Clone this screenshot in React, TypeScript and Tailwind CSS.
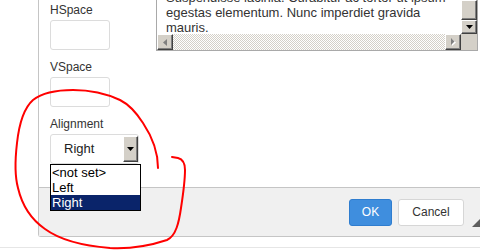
import React from "react";

const bevel =
  "bg-[#d4d0c8] border border-t-white border-l-white border-r-[#404040] border-b-[#404040] shadow-[inset_-1px_-1px_#808080]";

function Field({ label }: { label: string }) {
  return (
    <>
      <div className="h-[14px] leading-[14px] text-[12px]">{label}</div>
      <div className="mt-[3px] mb-[10px] w-[60px] h-[30px] border border-[#dcdcdc] rounded-[3px] bg-white" />
    </>
  );
}

export default function App() {
  return (
    <div className="relative w-[480px] h-[252px] overflow-hidden bg-white font-['Liberation_Sans',Arial,sans-serif] text-[#333]">
      <div className="ml-[38px] h-[237px] flex flex-col border-l border-b border-[#c5c5c5] rounded-bl-[3px] bg-white">
        <div className="relative z-10 flex h-[187px]">
          {/* left column */}
          <div className="w-[117px] pl-[11px] pt-[3px] flex flex-col">
            <Field label="HSpace" />
            <Field label="VSpace" />
            <div className="h-[14px] leading-[14px] text-[12px]">Alignment</div>
            <div className="relative mt-[3px] w-[89px] h-[30px] flex border border-[#dcdcdc] rounded-[3px] bg-white">
              <div className="flex-1 pl-[13px] text-[13px] leading-[28px] text-[#222]">Right</div>
              <div className={`w-[15px] my-px ${bevel} flex items-center justify-center`}>
                <svg width="7" height="4" viewBox="0 0 7 4">
                  <polygon points="0,0 7,0 3.5,4" fill="#000" />
                </svg>
              </div>
              {/* open list */}
              <div className="absolute z-20 left-[-1px] top-[29px] w-[91px] border border-black bg-white text-[13px] leading-[15px] text-black">
                <div className="pl-px">&lt;not set&gt;</div>
                <div className="pl-px">Left</div>
                <div className="pl-px bg-[#0a246a] text-white">Right</div>
              </div>
            </div>
          </div>

          {/* textarea */}
          <div className="w-[322px] h-[51px] flex flex-col border-l border-r border-b border-[#a9a9a9] bg-white">
            <div className="flex h-[34px]">
              <div className="flex-1 overflow-hidden pl-[9px] text-[13px] leading-[15px] text-[#333]">
                <div className="mt-[-10px]">
                  <div>Suspendisse lacinia. Curabitur ac tortor ut ipsum</div>
                  <div>egestas elementum. Nunc imperdiet gravida</div>
                  <div>mauris.</div>
                </div>
              </div>
              <div className="w-[16px] flex flex-col">
                <div className={`flex-1 ${bevel}`} />
                <div className={`h-[14px] ${bevel} flex items-center justify-center`}>
                  <svg width="7" height="4" viewBox="0 0 7 4">
                    <polygon points="0,0 7,0 3.5,4" fill="#000" />
                  </svg>
                </div>
              </div>
            </div>
            <div className="flex h-[16px]">
              <div className={`w-[16px] ${bevel} flex items-center justify-center`}>
                <svg width="4" height="7" viewBox="0 0 4 7">
                  <polygon points="4,0 4,7 0,3.5" fill="#808080" />
                </svg>
              </div>
              <div className="flex-1 bg-[image:repeating-conic-gradient(#d4d0c8_0_25%,#ffffff_0_50%)] bg-[length:2px_2px]" />
              <div className={`w-[16px] ${bevel} flex items-center justify-center`}>
                <svg width="5" height="8" viewBox="0 0 5 8">
                  <polygon points="1,1 1,8 5,4.5" fill="#ffffff" />
                  <polygon points="0,0 0,7 3.5,3.5" fill="#808080" />
                </svg>
              </div>
              <div className="w-[16px] bg-[#d4d0c8]" />
            </div>
          </div>
        </div>

        {/* footer */}
        <div className="relative flex-1 border-t border-[#c5c5c5] bg-[#f0f0f0] flex items-center justify-end gap-[6px] pr-[16px]">
          <button className="w-[43px] h-[27px] rounded-[3px] border border-[#2f7dcf] bg-[#3f8ede] text-white text-[12px]">
            OK
          </button>
          <button className="w-[66px] h-[27px] rounded-[3px] border border-[#d6d6d6] bg-white text-[#333] text-[12px]">
            Cancel
          </button>
          <svg className="absolute right-0 bottom-[9px]" width="8" height="8" viewBox="0 0 8 8">
            <polygon points="8,0 8,8 0,8" fill="#5e5e5e" />
          </svg>
        </div>
      </div>
      <div className="mt-[10px] h-px bg-[#e6e6e6]" />

      {/* red annotation */}
      <svg className="absolute inset-0 z-30 pointer-events-none" width="480" height="252" viewBox="0 0 480 252">
        <path
          d="M158,168 C158,155 153,138 143,123 C136,112 128,104 120,100 C105,93 88,90 73,90 C58,90 42,93 33,100 C24,108 19,125 17,143 C15,160 15,177 18,188 C22,205 32,220 45,229 C60,240 85,246 110,248 C130,249 152,245 167,240 C176,236 179,222 181,208 C183,195 185,178 185,170 C185,162 182,159 178,158 L172,157"
          fill="none"
          stroke="#ff0000"
          strokeWidth="2"
          strokeLinecap="round"
          strokeLinejoin="round"
        />
      </svg>
    </div>
  );
}
